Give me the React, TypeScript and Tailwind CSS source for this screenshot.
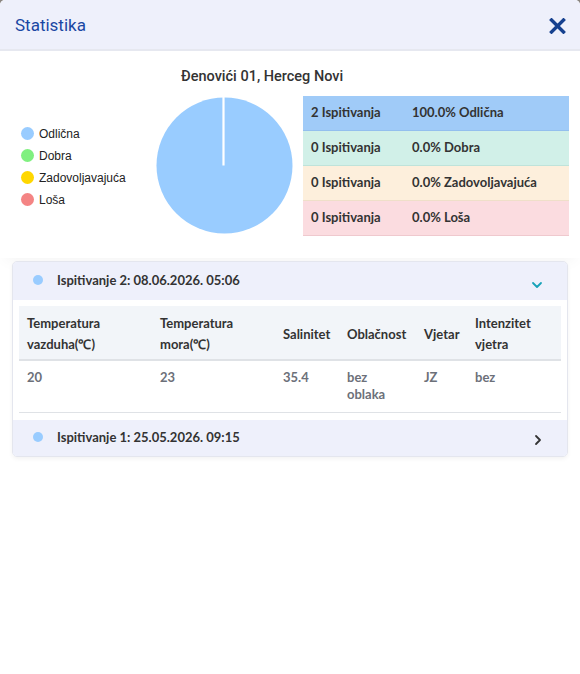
import React from 'react';

const legend = [
  { label: 'Odlična', color: 'bg-[#99ccff]' },
  { label: 'Dobra', color: 'bg-[#80f080]' },
  { label: 'Zadovoljavajuća', color: 'bg-[#ffd700]' },
  { label: 'Loša', color: 'bg-[#f48484]' },
];

const summary = [
  { count: '2 Ispitivanja', pct: '100.0% Odlična', row: 'bg-[#a0cbf8] border-[#93bfee]' },
  { count: '0 Ispitivanja', pct: '0.0% Dobra', row: 'bg-[#d1f0e8] border-[#bfe3da]' },
  { count: '0 Ispitivanja', pct: '0.0% Zadovoljavajuća', row: 'bg-[#fdefdc] border-[#efdfc9]' },
  { count: '0 Ispitivanja', pct: '0.0% Loša', row: 'bg-[#fbdce0] border-[#efc9ce]' },
];

const columns = [
  { title: 'Temperatura vazduha(℃)', w: 'w-[133px]', value: '20' },
  { title: 'Temperatura mora(℃)', w: 'w-[123px]', value: '23' },
  { title: 'Salinitet', w: 'w-[64px]', value: '35.4' },
  { title: 'Oblačnost', w: 'w-[77px]', value: 'bez oblaka' },
  { title: 'Vjetar', w: 'w-[51px]', value: 'JZ' },
  { title: 'Intenzitet vjetra', w: 'w-[94px]', value: 'bez' },
];

function ChevronDown() {
  return (
    <svg width="12" height="8" viewBox="0 0 12 8" fill="none">
      <path d="M2 2l4 4 4-4" stroke="#17a2b8" strokeWidth="1.8" strokeLinecap="round" strokeLinejoin="round" />
    </svg>
  );
}

function ChevronRight() {
  return (
    <svg width="8" height="12" viewBox="0 0 8 12" fill="none">
      <path d="M2 2l4 4-4 4" stroke="#333" strokeWidth="1.8" strokeLinecap="round" strokeLinejoin="round" />
    </svg>
  );
}

export default function App() {
  return (
    <div className="w-[580px] h-[674px] bg-[#8a8580]">
      <div className="w-full h-full bg-white rounded-t-[5px] overflow-hidden font-['Lato',sans-serif]">
        {/* Modal header */}
        <div className="h-[51px] bg-[#eef0fb] border-b-2 border-[#e6e8f0] flex items-center justify-between pl-[15px] pr-[14px]">
          <h1 className="text-[17px] text-[#1a47a3] font-['Roboto',sans-serif] pt-[2px]">Statistika</h1>
          <svg width="17" height="16" viewBox="0 0 17 16" className="mt-[2px]">
            <path d="M2.5 2l12 12M14.5 2l-12 12" stroke="#16418f" strokeWidth="3.4" strokeLinecap="square" />
          </svg>
        </div>

        {/* Overview */}
        <div className="pb-[22px] shadow-[0_8px_14px_-6px_rgba(0,0,0,0.05)]">
          <h2 className="pt-[15px] pl-[181px] text-[14.5px] font-medium font-['Roboto',sans-serif] text-[#333] leading-[22px]">
            Đenovići 01, Herceg Novi
          </h2>
          <div className="flex mt-[8px]">
            <ul className="w-[156px] pl-[21px] pt-[30px] flex flex-col gap-[7px] font-['Liberation_Sans',sans-serif] text-[12px] text-[#222]">
              {legend.map((l) => (
                <li key={l.label} className="flex items-center gap-[5px] h-[15px]">
                  <span className={`w-[13px] h-[13px] rounded-full ${l.color}`} />
                  <span>{l.label}</span>
                </li>
              ))}
            </ul>
            <svg width="137" height="137" viewBox="0 0 137 137" className="mt-[1px]">
              <circle cx="68.5" cy="68.5" r="68" fill="#99ccff" />
              <line x1="67.5" y1="0" x2="67.5" y2="68.5" stroke="#fff" strokeWidth="2.2" />
            </svg>
            <div className="ml-[10px] w-[266px] text-[13px] font-bold text-[#333]">
              {summary.map((s) => (
                <div key={s.pct} className={`h-[35px] flex items-center border-b ${s.row}`}>
                  <span className="w-[109px] pl-[8px]">{s.count}</span>
                  <span>{s.pct}</span>
                </div>
              ))}
            </div>
          </div>
        </div>

        {/* Measurements accordion */}
        <div className="mx-[12px] mt-[3px] border border-[#e4e6ee] rounded-[5px] shadow-[0_2px_4px_rgba(0,0,0,0.05)] overflow-hidden">
          <div className="h-[38px] bg-[#eef0fb] flex items-center pl-[20px] pr-[24px]">
            <span className="w-[10px] h-[10px] rounded-full bg-[#99ccff] -mt-[2px]" />
            <span className="ml-[14px] text-[13px] font-bold text-[#333]">Ispitivanje 2: 08.06.2026. 05:06</span>
            <span className="ml-auto mt-[8px]"><ChevronDown /></span>
          </div>
          <div className="px-[6px] pt-[6px] pb-[7px]">
            <div className="bg-[#f2f5f9] border-b-2 border-[#dfe2e6] flex pt-[7px] pb-[4px] text-[13px] font-bold text-[#333] leading-[21px]">
              {columns.map((c) => (
                <div key={c.title} className={`${c.w} px-[8px] flex items-center`}>{c.title}</div>
              ))}
            </div>
            <div className="flex pt-[8px] pb-[9px] border-b border-[#dfe2e6] text-[13px] font-bold text-[#6c7079] leading-[17px]">
              {columns.map((c) => (
                <div key={c.title} className={`${c.w} px-[8px]`}>{c.value}</div>
              ))}
            </div>
          </div>
          <div className="h-[36px] bg-[#eef0fb] flex items-center pl-[20px] pr-[25px]">
            <span className="w-[10px] h-[10px] rounded-full bg-[#99ccff] -mt-[2px]" />
            <span className="ml-[14px] text-[13px] font-bold text-[#333]">Ispitivanje 1: 25.05.2026. 09:15</span>
            <span className="ml-auto mt-[4px]"><ChevronRight /></span>
          </div>
        </div>
      </div>
    </div>
  );
}
